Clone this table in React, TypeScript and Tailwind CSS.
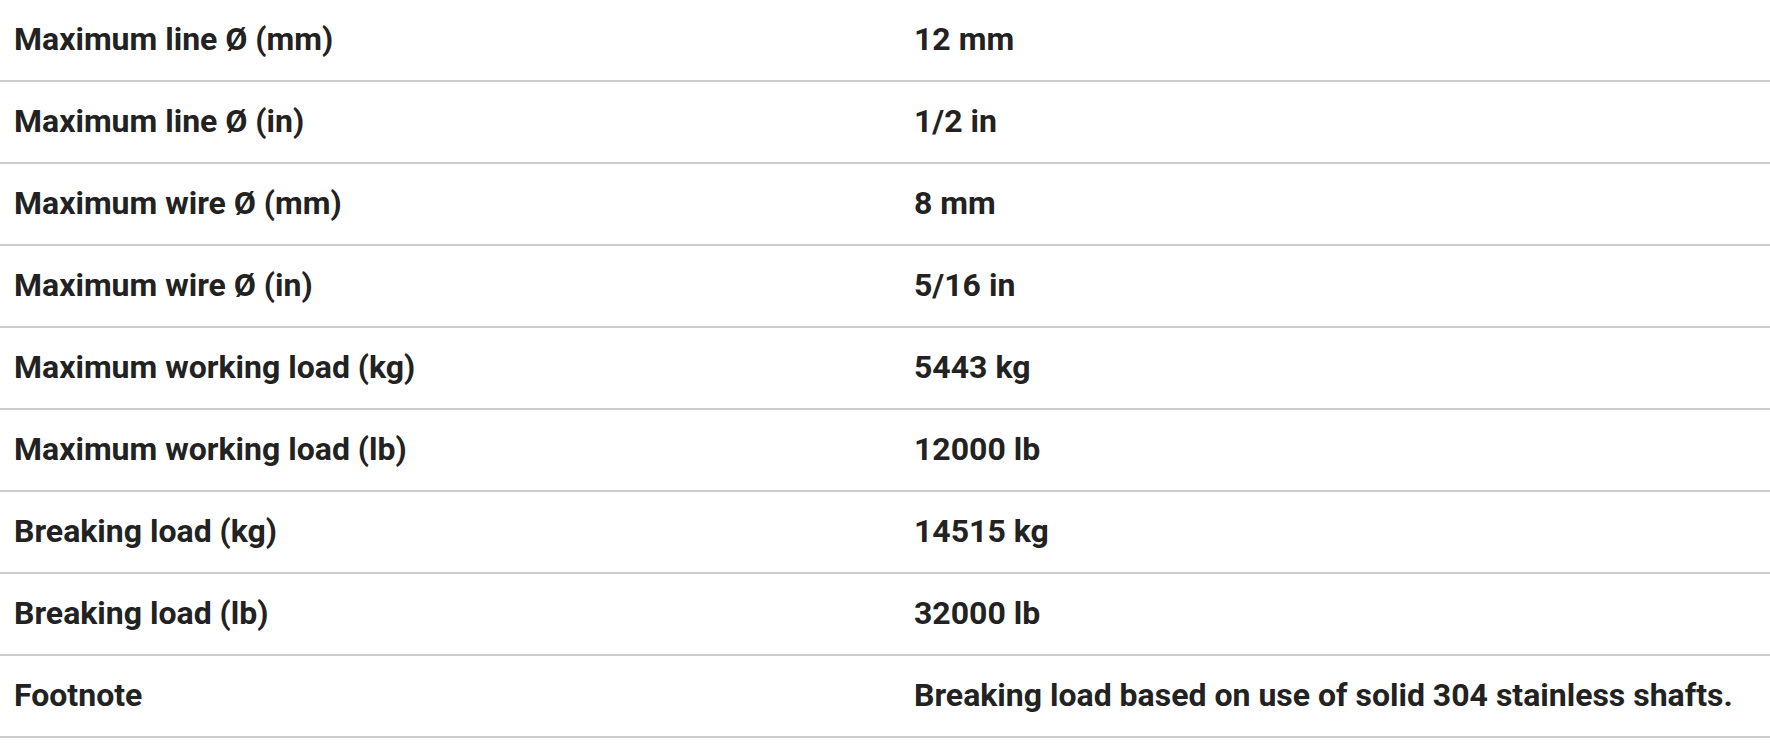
const rows: [string, string][] = [
  ['Maximum line Ø (mm)', '12 mm'],
  ['Maximum line Ø (in)', '1/2 in'],
  ['Maximum wire Ø (mm)', '8 mm'],
  ['Maximum wire Ø (in)', '5/16 in'],
  ['Maximum working load (kg)', '5443 kg'],
  ['Maximum working load (lb)', '12000 lb'],
  ['Breaking load (kg)', '14515 kg'],
  ['Breaking load (lb)', '32000 lb'],
  ['Footnote', 'Breaking load based on use of solid 304 stainless shafts.'],
];

export default function App() {
  return (
    <div className="w-full bg-white font-['Roboto',sans-serif] text-[32px] leading-none font-bold text-[#222]">
      {rows.map(([label, value]) => (
        <div
          key={label}
          className="grid h-[82px] grid-cols-[899px_1fr] items-center border-b-2 border-[#cccccc] pb-[3px]"
        >
          <div className="pl-[14px]">{label}</div>
          <div className="pl-[15px]">{value}</div>
        </div>
      ))}
    </div>
  );
}
